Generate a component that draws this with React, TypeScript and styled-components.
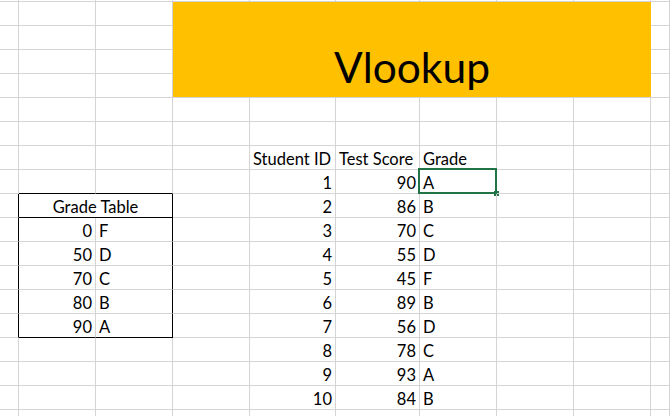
import React from "react";
import styled, { createGlobalStyle } from "styled-components";

const GRID = "#d4d4d4";
const INK = "#000000";

const Global = createGlobalStyle`
  html, body { margin: 0; padding: 0; background: #ffffff; overflow: hidden; }
  body { font-family: "Lato", "Liberation Sans", sans-serif; color: #000; }
`;

const Sheet = styled.div`
  display: grid;
  grid-template-columns: 19px 77px 77px 77px 86px 84px 77px 77px 77px 1fr;
  grid-template-rows: 2px repeat(18, 24px);
  width: 670px;
  height: 416px;
  overflow: hidden;
`;

type Align = "left" | "right" | "center";

const Cell = styled.div<{
  $align?: Align;
  $right?: string;
  $bottom?: string;
  $col?: string;
  $row?: string;
}>`
  box-sizing: border-box;
  position: relative;
  display: flex;
  align-items: flex-end;
  justify-content: ${(p) =>
    p.$align === "right" ? "flex-end" : p.$align === "center" ? "center" : "flex-start"};
  padding: 0 3px 1px 3px;
  border-right: 1px solid ${(p) => p.$right || GRID};
  border-bottom: 1px solid ${(p) => p.$bottom || GRID};
  font-size: 16.5px;
  line-height: 18px;
  white-space: nowrap;
  ${(p) => (p.$col ? `grid-column: ${p.$col};` : "")}
  ${(p) => (p.$row ? `grid-row: ${p.$row};` : "")}
`;

const TitleCell = styled.div`
  grid-column: 4 / 10;
  grid-row: 2 / 6;
  box-sizing: border-box;
  background: #ffc000;
  border-bottom: 1px solid ${GRID};
  display: flex;
  align-items: flex-end;
  justify-content: center;
  padding-bottom: 9px;
  font-size: 42.5px;
  line-height: 42px;
`;

const Selection = styled.div`
  position: absolute;
  left: -2px;
  top: -2px;
  width: 79px;
  height: 26px;
  box-sizing: border-box;
  border: 2px solid #217346;
  pointer-events: none;
`;

const Handle = styled.div`
  position: absolute;
  left: 74px;
  top: 21px;
  width: 5px;
  height: 5px;
  background: #217346;
`;

const gradeTable: [number, string][] = [
  [0, "F"],
  [50, "D"],
  [70, "C"],
  [80, "B"],
  [90, "A"],
];

const students: [number, number, string][] = [
  [1, 90, "A"],
  [2, 86, "B"],
  [3, 70, "C"],
  [4, 55, "D"],
  [5, 45, "F"],
  [6, 89, "B"],
  [7, 56, "D"],
  [8, 78, "C"],
  [9, 93, "A"],
  [10, 84, "B"],
];

export default function App() {
  const cells: React.ReactNode[] = [];
  for (let r = 0; r < 19; r++) {
    for (let c = 0; c < 10; c++) {
      const key = `${r}-${c}`;
      if (r >= 1 && r <= 4 && c >= 3 && c <= 8) {
        if (r === 1 && c === 3) cells.push(<TitleCell key={key}>Vlookup</TitleCell>);
        continue;
      }
      if (r === 9 && c === 2) continue;

      const inTable = r >= 9 && r <= 14;
      let right: string | undefined;
      let bottom: string | undefined;
      if (c === 0 && inTable) right = INK;
      if (c === 2 && inTable) right = INK;
      if ((c === 1 || c === 2) && (r === 8 || r === 9 || r === 14)) bottom = INK;

      let text: React.ReactNode = null;
      let align: Align = "left";
      let extra: React.ReactNode = null;

      if (r === 9 && c === 1) {
        cells.push(
          <Cell key={key} $col="2 / 4" $row="10 / 11" $align="center" $right={INK} $bottom={INK}>
            Grade Table
          </Cell>
        );
        continue;
      }
      if (r >= 10 && r <= 14) {
        const g = gradeTable[r - 10];
        if (c === 1) {
          text = g[0];
          align = "right";
        } else if (c === 2) {
          text = g[1];
        }
      }
      if (r === 7) {
        if (c === 4) text = "Student ID";
        if (c === 5) text = "Test Score";
        if (c === 6) text = "Grade";
      }
      if (r >= 8 && r <= 17) {
        const s = students[r - 8];
        if (c === 4) {
          text = s[0];
          align = "right";
        } else if (c === 5) {
          text = s[1];
          align = "right";
        } else if (c === 6) {
          text = s[2];
        }
      }
      if (r === 8 && c === 6) {
        extra = (
          <>
            <Selection />
            <Handle />
          </>
        );
      }
      cells.push(
        <Cell key={key} $align={align} $right={right} $bottom={bottom}>
          {text}
          {extra}
        </Cell>
      );
    }
  }
  return (
    <>
      <Global />
      <Sheet>{cells}</Sheet>
    </>
  );
}
